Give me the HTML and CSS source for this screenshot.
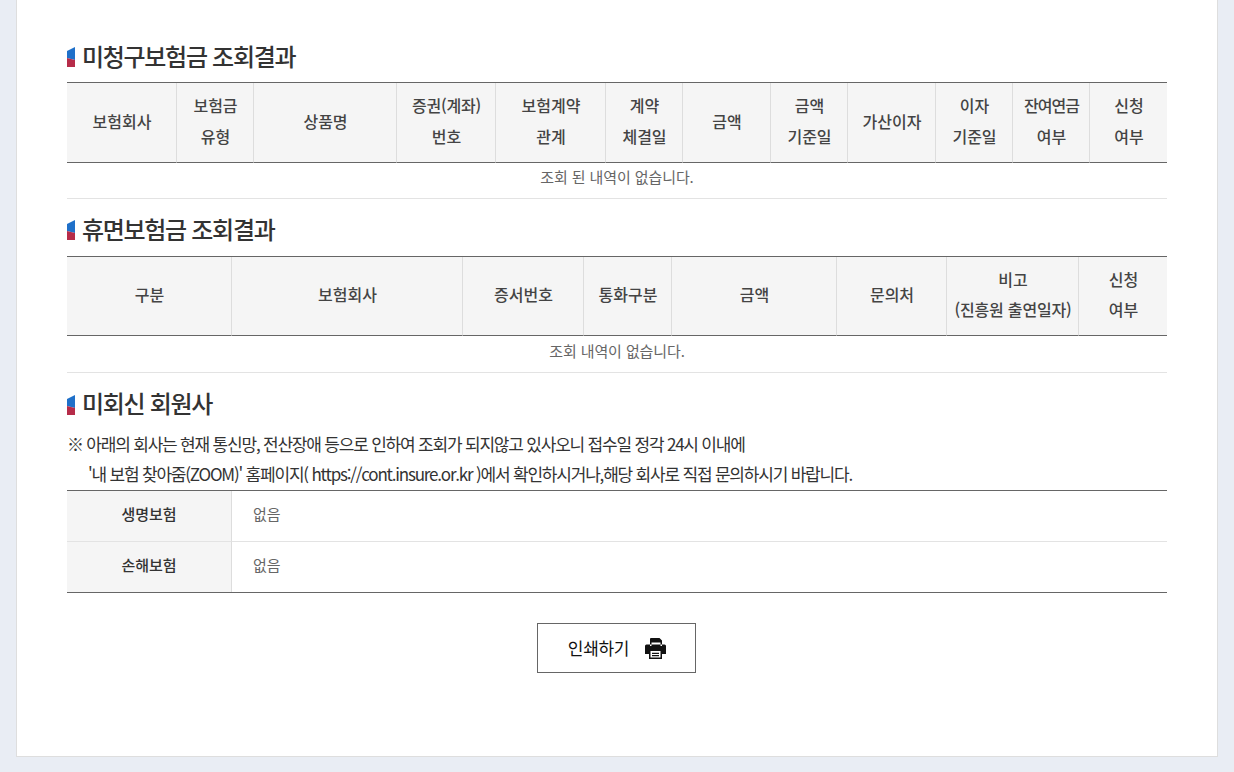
FILE: index.html
```html
<!DOCTYPE html>
<html lang="ko">
<head>
<meta charset="utf-8">
<title>조회결과</title>
<link rel="stylesheet" href="styles.css">
</head>
<body>
<main class="panel">
  <section class="section">
    <h2 class="heading"><svg class="mark" width="8" height="20" viewBox="0 0 8 20"><polygon points="0,4 8,0 8,13 0,11" fill="#1f70c9"/><polygon points="0,11 8,13 8,20 0,20" fill="#b62c49"/></svg>미청구보험금 조회결과</h2>
    <table class="grid grid-a">
      <colgroup>
        <col class="w110"><col class="w77"><col class="w143"><col class="w99"><col class="w110"><col class="w77"><col class="w88"><col class="w77"><col class="w88"><col class="w77"><col class="w77"><col class="w77">
      </colgroup>
      <thead>
        <tr><th>보험회사</th><th>보험금<br>유형</th><th>상품명</th><th><span class="tight-s">증권(계좌)</span><br>번호</th><th>보험계약<br>관계</th><th>계약<br>체결일</th><th>금액</th><th>금액<br>기준일</th><th>가산이자</th><th>이자<br>기준일</th><th><span class="tight">잔여연금</span><br>여부</th><th>신청<br>여부</th></tr>
      </thead>
      <tbody>
        <tr><td colspan="12">조회 된 내역이 없습니다.</td></tr>
      </tbody>
    </table>
  </section>
  <section class="section">
    <h2 class="heading heading-b"><svg class="mark" width="8" height="20" viewBox="0 0 8 20"><polygon points="0,4 8,0 8,13 0,11" fill="#1f70c9"/><polygon points="0,11 8,13 8,20 0,20" fill="#b62c49"/></svg>휴면보험금 조회결과</h2>
    <table class="grid grid-b">
      <colgroup>
        <col class="w165"><col class="w231"><col class="w121"><col class="w88"><col class="w165"><col class="w110"><col class="w132"><col class="w88">
      </colgroup>
      <thead>
        <tr><th>구분</th><th>보험회사</th><th>증서번호</th><th>통화구분</th><th>금액</th><th>문의처</th><th>비고<br><span class="tight-s">(진흥원 출연일자)</span></th><th>신청<br>여부</th></tr>
      </thead>
      <tbody>
        <tr><td colspan="8">조회 내역이 없습니다.</td></tr>
      </tbody>
    </table>
  </section>
  <section class="section section-c">
    <h2 class="heading heading-c"><svg class="mark" width="8" height="20" viewBox="0 0 8 20"><polygon points="0,4 8,0 8,13 0,11" fill="#1f70c9"/><polygon points="0,11 8,13 8,20 0,20" fill="#b62c49"/></svg>미회신 회원사</h2>
    <p class="note">※ 아래의 회사는 현재 통신망, 전산장애 등으로 인하여 조회가 되지않고 있사오니 접수일 정각 24시 이내에</p>
    <p class="note indent">'내 보험 찾아줌(ZOOM)' 홈페이지( https://cont.insure.or.kr )에서 확인하시거나,해당 회사로 직접 문의하시기 바랍니다.</p>
    <table class="info">
      <colgroup><col class="w165"><col></colgroup>
      <tbody>
        <tr><th>생명보험</th><td>없음</td></tr>
        <tr><th>손해보험</th><td>없음</td></tr>
      </tbody>
    </table>
  </section>
  <div class="actions">
    <button class="print" type="button"><span class="print-label">인쇄하기</span>
      <svg class="print-icon" width="21" height="21" viewBox="0 0 21 21"><path fill="#111" fill-rule="evenodd" d="M5 1a1 1 0 0 1 1-1h8.500L17 2.500V8h-1.500V4.500h-9V8H5zM1.500 6.500h18A1.500 1.500 0 0 1 21 8v8h-4v5H4v-5H0V8a1.500 1.500 0 0 1 1.500-1.500zM5.500 13v6.500h10V13zM7 14.700h7V16H7zm0 2.400h7v1.200H7z"/></svg>
    </button>
  </div>
</main>
</body>
</html>
```
FILE: styles.css
```css
* { box-sizing: border-box; }
html, body { margin: 0; padding: 0; }
body {
  height: 772px;
  overflow: hidden;
  background: #e9edf4;
  font-family: "Noto Sans CJK KR", "Noto Sans", sans-serif;
  color: #333;
}
.panel {
  width: 1202px;
  height: 757px;
  margin-left: 16px;
  padding: 36px 50px 0;
  background: #fff;
  border: 1px solid #dedede;
  border-top: 0;
}
.heading {
  display: flex;
  align-items: flex-start;
  height: 42px;
  margin: 0 0 4px;
  font-size: 24px;
  line-height: 39px;
  font-weight: 500;
  letter-spacing: -1.3px;
  color: #333;
}
.heading-b { margin-bottom: 5px; }
.heading-c { margin-bottom: 3px; line-height: 37px; }
.mark { margin: 11px 7px 0 0; flex: none; }
.grid, .info {
  width: 1100px;
  table-layout: fixed;
  border-collapse: separate;
  border-spacing: 0;
}
.grid { border-top: 1px solid #666; }
.grid th {
  padding: 0 0 2px 1px;
  background: #f5f5f5;
  border-bottom: 1px solid #666;
  border-right: 1px solid #ddd;
  font-size: 16px;
  font-weight: 500;
  color: #444;
  text-align: center;
}
.grid-a th { height: 80px; line-height: 31px; padding-bottom: 3px; }
.grid-b th { height: 79px; line-height: 30px; padding-bottom: 5px; }
.grid th:last-child { border-right: 0; }
.grid td {
  padding: 0 0 8px;
  border-bottom: 1px solid #e3e3e3;
  font-size: 15px;
  letter-spacing: -0.1px;
  color: #666;
  text-align: center;
}
.grid-a td { height: 36px; }
.grid-b td { height: 37px; }
.tight { letter-spacing: -1px; }
.tight-s { letter-spacing: -0.2px; }
.section + .section { margin-top: 10px; }
.section-c.section-c { margin-top: 11px; }
.w77 { width: 77px; }
.w88 { width: 88px; }
.w99 { width: 99px; }
.w110 { width: 110px; }
.w121 { width: 121px; }
.w132 { width: 132px; }
.w143 { width: 143px; }
.w165 { width: 165px; }
.w231 { width: 231px; }
.note {
  margin: 0;
  font-size: 17px;
  line-height: 30px;
  letter-spacing: -1.2px;
  color: #333;
}
.indent { padding-left: 21px; margin-bottom: 1px; }
.info { border-top: 1px solid #666; border-bottom: 1px solid #666; }
.info th, .info td {
  height: 51px;
  padding: 0 0 6px;
  border-bottom: 1px solid #e3e3e3;
  font-size: 15px;
}
.info tr:last-child th, .info tr:last-child td { height: 50px; border-bottom: 0; }
.info th {
  background: #f5f5f5;
  border-right: 1px solid #ddd;
  font-weight: 500;
  color: #333;
  text-align: center;
}
.info td { padding-left: 21px; color: #666; }
.actions { display: flex; justify-content: center; margin-top: 30px; padding-right: 1px; }
.print {
  display: flex;
  align-items: center;
  justify-content: center;
  gap: 16px;
  width: 159px;
  height: 50px;
  padding: 0 0 0 1px;
  background: #fff;
  border: 1px solid #666;
  font-family: inherit;
  font-size: 17px;
  font-weight: 400;
  letter-spacing: -0.3px;
  color: #111;
}
.print-label { margin-top: -2px; }
```
